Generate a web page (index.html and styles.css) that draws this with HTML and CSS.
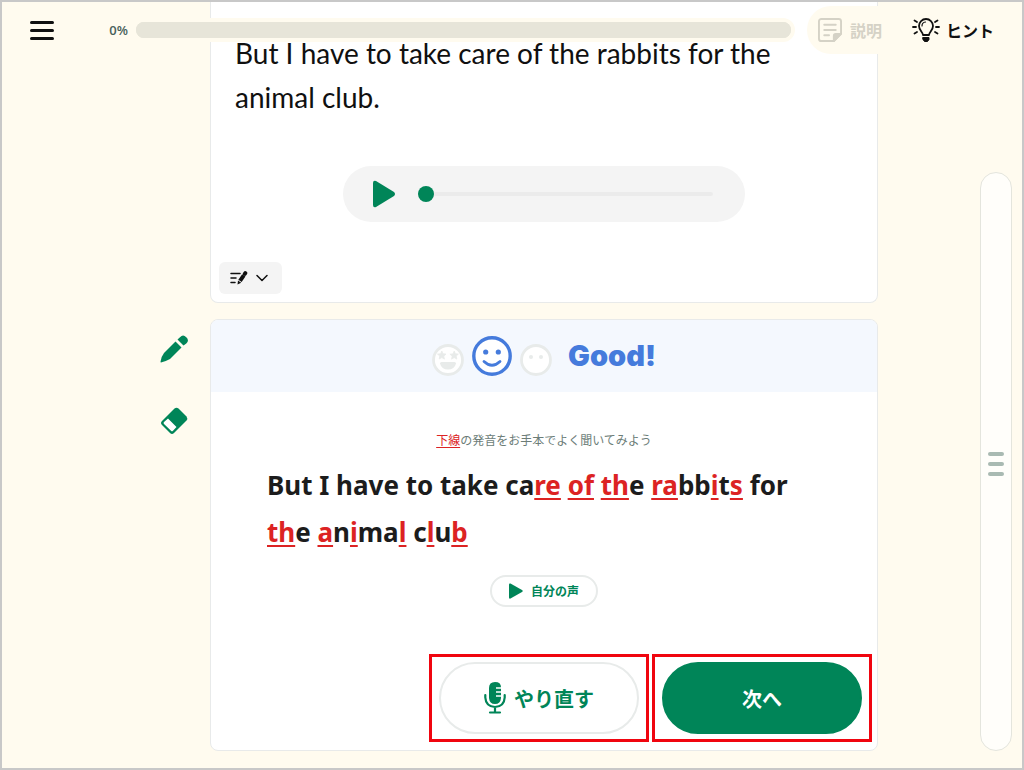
FILE: index.html
```html
<!DOCTYPE html>
<html lang="ja">
<head>
    <meta charset="UTF-8">
    <meta name="viewport" content="width=device-width, initial-scale=1.0">
    <title>Speaking</title>
    <link rel="stylesheet" href="styles.css">
</head>
<body>
    <div class="app">
        <header class="header">
            <button class="menu-button" aria-label="メニュー">
                <span class="menu-line"></span>
                <span class="menu-line"></span>
                <span class="menu-line"></span>
            </button>
            <label class="percent" for="progress">0%</label>
            <progress class="progress" id="progress" value="0" max="100"></progress>
            <button class="explain-button" disabled>
                <svg width="24" height="24" viewBox="0.500 0.500 25 25" fill="none" stroke="currentColor" stroke-width="2" stroke-linecap="round" stroke-linejoin="round">
                    <path d="M17 24.500H4A2.500 2.500 0 0 1 1.500 22V4A2.500 2.500 0 0 1 4 1.500h18A2.500 2.500 0 0 1 24.500 4v13z"/>
                    <path d="M7 7.500h12M7 13h12M7 18.500h5"/>
                    <path fill="currentColor" d="M17 24.500V19a2 2 0 0 1 2-2h5.500z"/>
                </svg>
                説明
            </button>
            <button class="hint-button">
                <svg width="28" height="24" viewBox="0 0 28 24" fill="none" stroke="currentColor" stroke-width="1.8" stroke-linecap="round" stroke-linejoin="round">
                    <path d="M11 17c0-3-4-4.500-4-9a7 7 0 0 1 14 0c0 4.500-4 6-4 9z"/>
                    <path stroke-width="1.200" d="M10 8a4 4 0 0 1 3.500-4"/>
                    <path d="M1 9h3M24 9h3M2.500 2.500l2.500 1.500M25.500 2.500L23 4M2.500 15.500L5 14M25.500 15.500L23 14"/>
                    <path fill="currentColor" stroke-width="1" d="M11 19.500h6v2l-1.500 2h-3L11 21.500z"/>
                </svg>
                ヒント
            </button>
        </header>

        <nav class="tools">
            <button class="tool-button" aria-label="ペン">
                <svg width="28" height="28" viewBox="0 0 28 28" fill="currentColor">
                    <path d="M15.500 6.500L21.500 12.500 10 24Q5.500 26.500 1 27.500q-.6 0-.5-.7Q1.500 21 4 18z"/>
                    <path d="M17.500 4.500L20 2.200q3-3.200 6.300 0t0 6.300L23.500 10.500z"/>
                </svg>
            </button>
            <button class="tool-button" aria-label="消しゴム">
                <svg width="28" height="28" viewBox="0 0 28 28">
                    <path fill="currentColor" d="M14.500 1.500q2-1.500 4 0l8 8q1.500 2 0 4L14 26q-2 2-4 0l-8-8q-2-2 0-4z"/>
                    <path fill="#fff" d="M8 11.500l8.500 8.500-3.500 3.800q-1 1-2 0L4 17q-1-1 0-2z"/>
                </svg>
            </button>
        </nav>

        <main class="content">
            <section class="card question">
                <p class="passage">But I have to take care of the rabbits for the animal club.</p>
                <div class="player">
                    <button class="player-play" aria-label="再生">
                        <svg width="24" height="28" viewBox="0 0 24 28">
                            <path fill="currentColor" d="M1 3q0-3 3-2l18 11q2 2 0 4L4 27q-3 1-3-2z"/>
                        </svg>
                    </button>
                    <input class="seek" type="range" min="0" max="100" value="0" aria-label="再生位置">
                </div>
                <button class="note-button" aria-label="メモ">
                    <svg width="18" height="14" viewBox="0 0 18 14" fill="none" stroke="currentColor" stroke-width="1.500" stroke-linecap="round">
                        <path d="M1 2.500h9M1 7h5M1 11.500h4"/>
                        <path d="M10 9.800L13.800 4.300" stroke-width="4" stroke-linecap="butt"/>
                        <path d="M14.800 2.900l.5-.7" stroke-width="4"/>
                        <path fill="currentColor" stroke="none" d="M8 9.500l3.200 2.200L7.500 13.500z"/>
                    </svg>
                    <svg width="12" height="8" viewBox="0 0 12 8" fill="none" stroke="currentColor" stroke-width="1.500" stroke-linecap="round" stroke-linejoin="round">
                        <path d="M1 1.500l5 5 5-5"/>
                    </svg>
                </button>
            </section>

            <section class="card result">
                <div class="result-header">
                    <div class="faces">
                        <svg class="face" width="32" height="32" viewBox="0 0 32 32">
                            <circle cx="16" cy="16" r="14.500" fill="#fff" stroke="currentColor" stroke-width="2.800"/>
                            <path fill="currentColor" stroke="currentColor" stroke-width=".8" stroke-linejoin="round" d="M9.800 7l1.200 2.800 3 .3-2.200 2 .6 3-2.600-1.500L7.200 15l.6-3-2.300-1.900 3.100-.3zM22.200 7l1.200 2.800 3 .3-2.200 2 .6 3-2.600-1.500-2.600 1.500.6-3-2.300-1.900 3.100-.3z"/>
                            <path fill="currentColor" d="M9.500 18h13q1.500 0 1.500 1.500-1.500 6-8 6t-8-6Q8 18 9.500 18z"/>
                        </svg>
                        <svg class="face face-active" width="40" height="40" viewBox="0 0 40 40">
                            <circle cx="20" cy="20" r="18.200" fill="#fff" stroke="currentColor" stroke-width="3.400"/>
                            <circle cx="13.700" cy="16" r="2.600" fill="currentColor"/>
                            <circle cx="26.300" cy="16" r="2.600" fill="currentColor"/>
                            <path d="M12 25.500q8 7.500 16 0" fill="none" stroke="currentColor" stroke-width="2.800" stroke-linecap="round"/>
                        </svg>
                        <svg class="face" width="32" height="32" viewBox="0 0 32 32">
                            <circle cx="16" cy="16" r="14.500" fill="#fff" stroke="currentColor" stroke-width="2.800"/>
                            <circle cx="11" cy="13" r="2" fill="currentColor"/>
                            <circle cx="21" cy="13" r="2" fill="currentColor"/>
                        </svg>
                    </div>
                    <h2 class="grade">Good!</h2>
                </div>
                <p class="advice"><u>下線</u>の発音をお手本でよく聞いてみよう</p>
                <p class="sentence">But I have to take ca<u>re</u> <u>of</u> <u>th</u>e <u>ra</u>bb<u>i</u>t<u>s</u> for <u>th</u>e <u>a</u>n<u>i</u>ma<u>l</u> c<u>l</u>u<u>b</u></p>
                <button class="voice-button">
                    <svg width="14" height="16" viewBox="0 0 14 16">
                        <path fill="currentColor" d="M0 1.500Q0 0 1.500.500L13 7q1.500 1 0 2L1.500 15.500Q0 16 0 14.500z"/>
                    </svg>
                    自分の声
                </button>
                <div class="actions">
                    <div class="action-frame">
                        <button class="action-button">
                            <svg width="22" height="32" viewBox="0 0 22 32" fill="none" stroke="currentColor" stroke-width="2.200" stroke-linecap="round">
                                <path fill="currentColor" stroke="none" d="M11 0q6 0 6 5.200h-5v1.600h5v2.400h-5v1.600h5v2.400h-5v1.600h5V16q-.5 6-6 6t-6-6V6q0-6 6-6z"/>
                                <path d="M1.300 13v2.500q.5 9 9.700 9.500 9.200-.5 9.700-9.500V13M11 25v5.500M6 30.500h10"/>
                            </svg>
                            やり直す
                        </button>
                    </div>
                    <div class="action-frame">
                        <button class="action-button action-next">次へ</button>
                    </div>
                </div>
            </section>
        </main>

        <aside class="side">
            <button class="drawer" aria-label="開く">
                <span class="drawer-line"></span>
                <span class="drawer-line"></span>
                <span class="drawer-line"></span>
            </button>
        </aside>
    </div>
</body>
</html>
```

FILE: styles.css
```css
* {
    box-sizing: border-box;
}

body {
    margin: 0;
    font-family: "Open Sans", "Noto Sans CJK JP", sans-serif;
    color: #1c1c1c;
    background: #fffbef;
}

button {
    display: flex;
    align-items: center;
    justify-content: center;
    margin: 0;
    padding: 0;
    border: none;
    background: none;
    color: inherit;
    font-family: inherit;
    cursor: pointer;
}

svg {
    display: block;
    flex: none;
}

.app {
    position: relative;
    display: grid;
    grid-template-columns: 208px minmax(0, 1fr) 144px;
    min-height: 100vh;
    border: 2px solid #c8c8c8;
    background: #fffbef;
}

/* header floats over the scrolled cards */
.header {
    position: absolute;
    top: 0;
    left: 0;
    right: 0;
    display: flex;
    align-items: center;
    height: 56px;
    padding: 0 28px;
}

.menu-button {
    flex-direction: column;
    gap: 5px;
}

.menu-line {
    width: 24px;
    height: 3px;
    border-radius: 2px;
    background: #101010;
}

.percent {
    width: 74px;
    text-align: right;
    font-size: 13px;
    font-weight: 600;
    color: #47605a;
}

.progress {
    flex: 1;
    height: 24px;
    margin: 0 12px 0 4px;
    border: 4px solid #fffbef;
    border-radius: 12px;
    background: #e7e5d9;
    appearance: none;
}

.progress::-webkit-progress-bar {
    border-radius: 8px;
    background: #e7e5d9;
}

.progress::-webkit-progress-value {
    border-radius: 8px;
    background: #008558;
}

.explain-button,
.hint-button {
    gap: 8px;
    font-size: 16px;
    font-weight: 700;
}

.explain-button {
    height: 48px;
    padding: 0 18px 0 11px;
    border-radius: 24px 0 0 24px;
    background: #fffbef;
    color: #d5d2c6;
}

.hint-button {
    gap: 6px;
    padding-left: 12px;
    color: #101010;
}

.tools {
    display: flex;
    flex-direction: column;
    align-items: flex-end;
    gap: 44px;
    padding: 333px 22px 0 0;
}

.tool-button {
    color: #008558;
}

.content {
    display: flex;
    flex-direction: column;
    gap: 16px;
    padding-bottom: 17px;
}

.card {
    border: 1px solid #e8eaea;
    border-radius: 8px;
    background: #fff;
}

.question {
    padding: 29px 8px 8px;
    border-top: none;
    border-radius: 0 0 8px 8px;
}

.passage {
    margin: 0 16px;
    font-family: Lato, sans-serif;
    font-size: 28px;
    line-height: 44px;
    color: #101010;
}

.player {
    display: flex;
    align-items: center;
    gap: 22px;
    width: 402px;
    height: 56px;
    margin: 47px auto 40px;
    padding: 0 32px 0 29px;
    border-radius: 28px;
    background: #f4f4f4;
}

.player-play {
    color: #008558;
}

.seek {
    flex: 1;
    min-width: 0;
    height: 16px;
    margin: 0;
    background: none;
    appearance: none;
}

.seek::-webkit-slider-runnable-track {
    height: 4px;
    border-radius: 2px;
    background: #ebebeb;
}

.seek::-webkit-slider-thumb {
    width: 16px;
    height: 16px;
    margin-top: -6px;
    border-radius: 50%;
    background: #008558;
    appearance: none;
}

.note-button {
    gap: 8px;
    width: 63px;
    height: 32px;
    padding-right: 4px;
    border-radius: 6px;
    background: #f4f4f4;
    color: #101010;
}

.result {
    overflow: hidden;
}

.result-header {
    display: flex;
    align-items: center;
    justify-content: center;
    gap: 16px;
    height: 72px;
    background: #f4f8fe;
}

.faces {
    display: flex;
    align-items: flex-end;
    gap: 8px;
}

.face {
    color: #e8ebea;
}

.face-active {
    color: #457bdc;
}

.grade {
    margin: 0;
    font-family: Inter, sans-serif;
    font-size: 29px;
    font-weight: 900;
    line-height: 40px;
    color: #457bdc;
}

.advice {
    margin: 39px 0 0;
    font-size: 12px;
    line-height: 20px;
    text-align: center;
    color: #6c7d78;
}

.sentence {
    margin: 11px 56px 0;
    font-family: "Noto Sans", sans-serif;
    font-size: 26px;
    font-weight: 700;
    line-height: 47px;
}

.result u {
    color: #dc2323;
    text-decoration-thickness: 2px;
    text-underline-offset: 3px;
}

.advice u {
    text-decoration-thickness: 1px;
    text-underline-offset: 2px;
}

.voice-button {
    gap: 8px;
    width: 108px;
    height: 32px;
    margin: 19px auto 0;
    border: 2px solid #e8ebea;
    border-radius: 16px;
    background: #fff;
    color: #008558;
    font-size: 12px;
    font-weight: 700;
}

.actions {
    display: flex;
    justify-content: flex-end;
    gap: 3px;
    margin: 47px 5px 8px;
}

.action-frame {
    padding: 5px 7px;
    border: 3px solid #f0050f;
}

.action-button {
    gap: 8px;
    width: 200px;
    height: 72px;
    border: 2px solid #e8ebea;
    border-radius: 36px;
    background: #fff;
    color: #008558;
    font-size: 20px;
    font-weight: 700;
}

.action-next {
    border-color: #008558;
    background: #008558;
    color: #fff;
}

.side {
    display: flex;
    justify-content: flex-end;
    padding: 170px 10px 17px 0;
}

.drawer {
    flex-direction: column;
    gap: 6px;
    width: 32px;
    padding-top: 4px;
    border: 1px solid #e4e5dd;
    border-radius: 16px;
    background: #fffefa;
}

.drawer-line {
    width: 16px;
    height: 4px;
    border-radius: 2px;
    background: #a9bab2;
}
```
